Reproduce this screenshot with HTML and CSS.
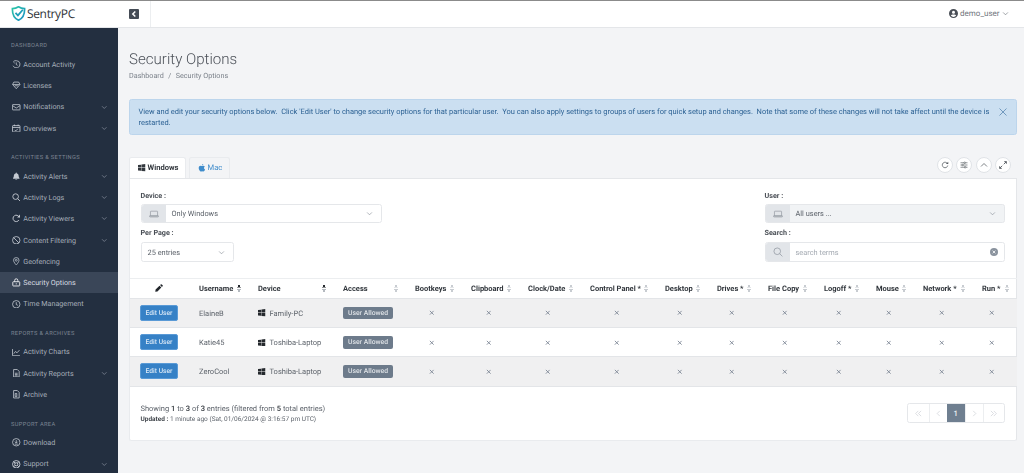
FILE: index.html
```html
<!DOCTYPE html>
<html lang="en">
<head>
<meta charset="utf-8">
<title>Security Options</title>
<link rel="stylesheet" href="styles.css">
</head>
<body>
<svg class="defs" width="0" height="0" aria-hidden="true">
  <symbol id="chev" viewBox="0 0 16 16"><path d="M2.500 5.500 8 11l5.500-5.500" fill="none" stroke="currentColor" stroke-width="1.500"/></symbol>
  <symbol id="win" viewBox="0 0 16 16"><path fill="currentColor" d="M0 2.300 6.500 1.400V7.500H0ZM7.300 1.300 16 0V7.500H7.300ZM0 8.300H6.500V14.500L0 13.600ZM7.300 8.300H16V16L7.300 14.700Z"/></symbol>
  <symbol id="laptop" viewBox="0 0 16 16"><path fill="none" stroke="currentColor" stroke-width="1.100" d="M3 3.500h10a.7.7 0 0 1 .7.7V11H2.300V4.200a.7.7 0 0 1 .7-.7ZM.8 11h14.400v.7a1 1 0 0 1-1 1H1.800a1 1 0 0 1-1-1Z"/></symbol>
  <symbol id="x" viewBox="0 0 16 16"><path d="M2.500 2.500l11 11M13.500 2.500l-11 11" fill="none" stroke="currentColor" stroke-width="2.600"/></symbol>
</svg>

<div class="app">
  <header class="topbar">
    <div class="brand">
      <svg class="shield" viewBox="0 0 16 16"><defs><linearGradient id="sg" x1="0" y1="0" x2="1" y2="1"><stop offset="0" stop-color="#2cc7a6"/><stop offset="1" stop-color="#1c8fc4"/></linearGradient></defs><path d="M8 .8c2 1.300 4 1.900 6.500 2 .2 5.500-1 9.800-6.500 12.400C2.500 12.600 1.300 8.300 1.500 2.800 4 2.700 6 2.100 8 .8Z" fill="none" stroke="url(#sg)" stroke-width="1.800"/><path d="M4.800 7.300 7.400 10l5.200-6" fill="none" stroke="#1f9fb8" stroke-width="1.900"/></svg>
      <span class="brand-name">SentryPC</span>
    </div>
    <div class="toggle-cell"><span class="toggle"><svg viewBox="0 0 10 10"><path d="M6.300 2.500 3.800 5l2.500 2.500" fill="none" stroke="#fff" stroke-width="1.500"/></svg></span></div>
    <div class="user">
      <svg class="user-ic" viewBox="0 0 16 16"><path fill="#4a4f57" d="M8 0a8 8 0 1 1 0 16A8 8 0 0 1 8 0Zm0 3.200a2.700 2.700 0 1 0 0 5.400 2.700 2.700 0 0 0 0-5.400ZM8 14a6 6 0 0 0 4.700-2.300C12 10.400 10.300 9.800 8 9.800s-4 .6-4.700 1.900A6 6 0 0 0 8 14Z"/></svg>
      <span>demo_user</span>
      <svg class="chev-sm"><use href="#chev"/></svg>
    </div>
  </header>

  <div class="body">
    <nav class="sidebar">
      <div class="nav-label">DASHBOARD</div>
      <a class="nav-item"><svg class="ni" viewBox="0 0 16 16"><path d="M2.500 3.500 5 5.800M3 2.500c1.500-1 3-1.500 5-1.200a6.800 6.800 0 1 1-6 9.500M8 4.500V8.500l2.500 1.500" fill="none" stroke="currentColor" stroke-width="1.500"/></svg><span>Account Activity</span></a>
      <a class="nav-item"><svg class="ni" viewBox="0 0 16 16"><path d="M8 14.500 1 6.500 3.500 2h9L15 6.500ZM1.500 6.500h13M5 9h6" fill="none" stroke="currentColor" stroke-width="1.500"/></svg><span>Licenses</span></a>
      <a class="nav-item"><svg class="ni" viewBox="0 0 16 16"><path d="M1.800 3h12.400a1 1 0 0 1 1 1v8a1 1 0 0 1-1 1H1.800a1 1 0 0 1-1-1V4a1 1 0 0 1 1-1ZM1 5l7 4.500L15 5" fill="none" stroke="currentColor" stroke-width="1.500"/></svg><span>Notifications</span><svg class="chev"><use href="#chev"/></svg></a>
      <a class="nav-item"><svg class="ni" viewBox="0 0 16 16"><path d="M2 3h12a1 1 0 0 1 1 1v10a1 1 0 0 1-1 1H2a1 1 0 0 1-1-1V4a1 1 0 0 1 1-1ZM4.500 1v3M11.500 1v3M1 6.500h14M5 11l2 2 4-4" fill="none" stroke="currentColor" stroke-width="1.600"/></svg><span>Overviews</span><svg class="chev"><use href="#chev"/></svg></a>

      <div class="nav-label gap">ACTIVITIES &amp; SETTINGS</div>
      <a class="nav-item"><svg class="ni" viewBox="0 0 16 16"><path d="M8 1a1 1 0 0 1 1 1v.6c2.300.5 3.500 2.300 3.500 4.600 0 2 .5 3.300 1.500 4.300v1H2v-1c1-1 1.500-2.300 1.500-4.300C3.500 4.900 4.700 3.100 7 2.600V2a1 1 0 0 1 1-1ZM6.200 14.200h3.600a1.800 1.800 0 0 1-3.600 0Z" fill="currentColor"/></svg><span>Activity Alerts</span><svg class="chev"><use href="#chev"/></svg></a>
      <a class="nav-item"><svg class="ni" viewBox="0 0 16 16"><path d="M6.800 1.500a5.300 5.300 0 1 1 0 10.600 5.300 5.300 0 0 1 0-10.600ZM10.600 10.600l4.400 4.400" fill="none" stroke="currentColor" stroke-width="1.700"/></svg><span>Activity Logs</span><svg class="chev"><use href="#chev"/></svg></a>
      <a class="nav-item"><svg class="ni" viewBox="0 0 16 16"><path d="M13.500 6A6 6 0 1 0 13 11.500" fill="none" stroke="currentColor" stroke-width="1.800"/><path d="M9.500 6.500h5.500V1Z" fill="currentColor"/></svg><span>Activity Viewers</span><svg class="chev"><use href="#chev"/></svg></a>
      <a class="nav-item"><svg class="ni" viewBox="0 0 16 16"><path d="M8 1a7 7 0 1 1 0 14A7 7 0 0 1 8 1ZM3 3l10 10" fill="none" stroke="currentColor" stroke-width="1.600"/></svg><span>Content Filtering</span><svg class="chev"><use href="#chev"/></svg></a>
      <a class="nav-item"><svg class="ni" viewBox="0 0 16 16"><path d="M8 1a5.200 5.200 0 0 1 5.200 5.200C13.200 9.500 8 15 8 15S2.800 9.500 2.800 6.200A5.200 5.200 0 0 1 8 1Zm0 3.400a1.800 1.800 0 1 0 0 3.600 1.800 1.800 0 0 0 0-3.600Z" fill="none" stroke="currentColor" stroke-width="1.400"/></svg><span>Geofencing</span></a>
      <a class="nav-item active"><svg class="ni" viewBox="0 0 16 16"><path d="M2.500 7h11a1 1 0 0 1 1 1v6a1 1 0 0 1-1 1h-11a1 1 0 0 1-1-1V8a1 1 0 0 1 1-1ZM5 7V4.500a3 3 0 0 1 6 0V7M8 10v2" fill="none" stroke="currentColor" stroke-width="1.700"/></svg><span>Security Options</span></a>
      <a class="nav-item"><svg class="ni" viewBox="0 0 16 16"><path d="M8 1a7 7 0 1 1 0 14A7 7 0 0 1 8 1ZM8 4v4.500l3 1.500" fill="none" stroke="currentColor" stroke-width="1.500"/></svg><span>Time Management</span></a>

      <div class="nav-label gap">REPORTS &amp; ARCHIVES</div>
      <a class="nav-item"><svg class="ni" viewBox="0 0 16 16"><path d="M1 2v12.500h14M3.500 10.500l3-4 3 2.500 4.500-5" fill="none" stroke="currentColor" stroke-width="1.500"/></svg><span>Activity Charts</span></a>
      <a class="nav-item"><svg class="ni" viewBox="0 0 16 16"><path d="M3 1h7l3.500 3.500V15H3ZM5.500 8h5M5.500 10.500h5M5.500 13h5" fill="none" stroke="currentColor" stroke-width="1.500"/></svg><span>Activity Reports</span><svg class="chev"><use href="#chev"/></svg></a>
      <a class="nav-item"><svg class="ni" viewBox="0 0 16 16"><path d="M3 1h7l3.500 3.500V15H3ZM6 6.500h3v6H6Z" fill="none" stroke="currentColor" stroke-width="1.500"/></svg><span>Archive</span></a>

      <div class="nav-label gap">SUPPORT AREA</div>
      <a class="nav-item"><svg class="ni" viewBox="0 0 16 16"><path d="M8 1a7 7 0 1 1 0 14A7 7 0 0 1 8 1ZM8 4v5M5.500 7 8 9.500 10.500 7M5 11.500h6" fill="none" stroke="currentColor" stroke-width="1.500"/></svg><span>Download</span></a>
      <a class="nav-item"><svg class="ni" viewBox="0 0 16 16"><path d="M8 1a7 7 0 1 1 0 14A7 7 0 0 1 8 1Zm0 4a3 3 0 1 0 0 6 3 3 0 0 0 0-6ZM3 3l3 3M13 3l-3 3M3 13l3-3M13 13l-3-3" fill="none" stroke="currentColor" stroke-width="1.800"/></svg><span>Support</span><svg class="chev"><use href="#chev"/></svg></a>
    </nav>

    <main class="main">
      <h1 class="title">Security Options</h1>
      <div class="crumbs">Dashboard<span class="sep">/</span>Security Options</div>

      <div class="alert">
        <p>View and edit your security options below.&nbsp; Click 'Edit User' to change security options for that particular user.&nbsp; You can also apply settings to groups of users for quick setup and changes.&nbsp; Note that some of these changes will not take affect until the device is restarted.</p>
        <svg class="alert-x" viewBox="0 0 16 16"><path d="M1 1l14 14M15 1 1 15" fill="none" stroke="currentColor" stroke-width="1.400"/></svg>
      </div>

      <div class="tabbar">
        <div class="tab current"><svg class="tab-ic"><use href="#win"/></svg>Windows</div>
        <div class="tab other"><svg class="tab-ic" viewBox="0 0 16 16"><path fill="currentColor" d="M11.200 0c.1 1.500-1.300 3.300-3 3.200C8 1.700 9.500.1 11.200 0ZM8.300 4.300c.8 0 1.800-.8 3.200-.8 1 0 2.300.5 3.100 1.700-2.700 1.600-2.200 5.300.6 6.400-.7 1.800-2.200 4.400-3.700 4.400-1 0-1.400-.7-2.700-.7s-1.800.7-2.700.7C4.200 16 1.500 12 1.500 8.500c0-3.200 2-5 4-5 1.200 0 2.200.8 2.800.8Z"/></svg>Mac</div>
        <div class="tools">
          <span class="tool"><svg viewBox="0 0 16 16"><path d="M13 5.500A5.500 5.500 0 1 0 13.500 9" fill="none" stroke="currentColor" stroke-width="1.500"/><path d="M9.800 6h4.700V1.300Z" fill="currentColor"/></svg></span>
          <span class="tool"><svg viewBox="0 0 16 16"><path d="M1 3.500h14M1 8h14M1 12.500h14" stroke="currentColor" stroke-width="1.300"/><path d="M8 2h2.500v3H8ZM4 6.500h2.500v3H4ZM9 11h2.500v3H9Z" fill="#fff" stroke="currentColor"/></svg></span>
          <span class="tool"><svg viewBox="0 0 16 16"><path d="M2 11 8 5l6 6" fill="none" stroke="currentColor" stroke-width="1.500"/></svg></span>
          <span class="tool"><svg viewBox="0 0 16 16"><path d="M9.500 6.500 14.500 1.500M14.800 1.200v4.300M14.800 1.200h-4.300M6.500 9.500l-5 5M1.200 14.800v-4.300M1.200 14.800h4.300" fill="none" stroke="currentColor" stroke-width="1.800"/></svg></span>
        </div>
      </div>

      <section class="panel">
        <div class="filters">
          <div class="fcol">
            <label class="flabel">Device :</label>
            <div class="field device">
              <span class="addon"><svg><use href="#laptop"/></svg></span>
              <span class="value">Only Windows</span>
              <svg class="chev-f"><use href="#chev"/></svg>
            </div>
            <label class="flabel second">Per Page :</label>
            <div class="field perpage">
              <span class="value plain">25 entries</span>
              <svg class="chev-f"><use href="#chev"/></svg>
            </div>
          </div>
          <div class="fcol right">
            <label class="flabel">User :</label>
            <div class="field device shaded">
              <span class="addon"><svg><use href="#laptop"/></svg></span>
              <span class="value">All users ...</span>
              <svg class="chev-f"><use href="#chev"/></svg>
            </div>
            <label class="flabel second">Search :</label>
            <div class="field perpage wide">
              <span class="addon"><svg viewBox="0 0 16 16"><path d="M6.800 1.500a5.300 5.300 0 1 1 0 10.600 5.300 5.300 0 0 1 0-10.600ZM10.600 10.600l4.400 4.400" fill="none" stroke="currentColor" stroke-width="1.200"/></svg></span>
              <span class="value placeholder">search terms</span>
              <svg class="clear" viewBox="0 0 16 16"><circle cx="8" cy="8" r="8" fill="#8a939e"/><path d="M5.300 5.300l5.400 5.400M10.700 5.300l-5.400 5.400" stroke="#fff" stroke-width="1.600"/></svg>
            </div>
          </div>
        </div>

        <table class="grid">
          <thead>
            <tr>
              <th class="c1"><svg class="pencil" viewBox="0 0 16 16"><path fill="#22262b" d="M11.500.8a1.500 1.500 0 0 1 2.100 0l1.600 1.600a1.500 1.500 0 0 1 0 2.100l-1.400 1.400-3.700-3.700ZM9 3.300l3.700 3.700-7.800 7.800L.5 15.500l.7-4.400Z"/></svg></th>
              <th class="c2"><div class="th"><span>Username</span><span class="sort up"></span></div></th>
              <th class="c3"><div class="th"><span>Device</span><span class="sort up"></span></div></th>
              <th class="c4"><div class="th"><span>Access</span><span class="sort"></span></div></th>
              <th class="c5"><div class="th"><span>Bootkeys</span><span class="sort"></span></div></th>
              <th class="c6"><div class="th"><span>Clipboard</span><span class="sort"></span></div></th>
              <th class="c7"><div class="th"><span>Clock/Date</span><span class="sort"></span></div></th>
              <th class="c8"><div class="th"><span>Control Panel *</span><span class="sort"></span></div></th>
              <th class="c9"><div class="th"><span>Desktop</span><span class="sort"></span></div></th>
              <th class="c10"><div class="th"><span>Drives *</span><span class="sort"></span></div></th>
              <th class="c11"><div class="th"><span>File Copy</span><span class="sort"></span></div></th>
              <th class="c12"><div class="th"><span>Logoff *</span><span class="sort"></span></div></th>
              <th class="c13"><div class="th"><span>Mouse</span><span class="sort"></span></div></th>
              <th class="c14"><div class="th"><span>Network *</span><span class="sort"></span></div></th>
              <th class="c15"><div class="th"><span>Run *</span><span class="sort"></span></div></th>
            </tr>
          </thead>
          <tbody>
            <tr class="odd">
              <td class="ctr"><span class="btn">Edit User</span></td><td>ElaineB</td>
              <td><span class="dev"><svg><use href="#win"/></svg>Family-PC</span></td>
              <td><span class="badge">User Allowed</span></td>
              <td class="no"><svg><use href="#x"/></svg></td><td class="no"><svg><use href="#x"/></svg></td><td class="no"><svg><use href="#x"/></svg></td><td class="no"><svg><use href="#x"/></svg></td><td class="no"><svg><use href="#x"/></svg></td><td class="no"><svg><use href="#x"/></svg></td><td class="no"><svg><use href="#x"/></svg></td><td class="no"><svg><use href="#x"/></svg></td><td class="no"><svg><use href="#x"/></svg></td><td class="no"><svg><use href="#x"/></svg></td><td class="no last"><svg><use href="#x"/></svg></td>
            </tr>
            <tr>
              <td class="ctr"><span class="btn">Edit User</span></td><td>Katie45</td>
              <td><span class="dev"><svg><use href="#win"/></svg>Toshiba-Laptop</span></td>
              <td><span class="badge">User Allowed</span></td>
              <td class="no"><svg><use href="#x"/></svg></td><td class="no"><svg><use href="#x"/></svg></td><td class="no"><svg><use href="#x"/></svg></td><td class="no"><svg><use href="#x"/></svg></td><td class="no"><svg><use href="#x"/></svg></td><td class="no"><svg><use href="#x"/></svg></td><td class="no"><svg><use href="#x"/></svg></td><td class="no"><svg><use href="#x"/></svg></td><td class="no"><svg><use href="#x"/></svg></td><td class="no"><svg><use href="#x"/></svg></td><td class="no last"><svg><use href="#x"/></svg></td>
            </tr>
            <tr class="odd">
              <td class="ctr"><span class="btn">Edit User</span></td><td>ZeroCool</td>
              <td><span class="dev"><svg><use href="#win"/></svg>Toshiba-Laptop</span></td>
              <td><span class="badge">User Allowed</span></td>
              <td class="no"><svg><use href="#x"/></svg></td><td class="no"><svg><use href="#x"/></svg></td><td class="no"><svg><use href="#x"/></svg></td><td class="no"><svg><use href="#x"/></svg></td><td class="no"><svg><use href="#x"/></svg></td><td class="no"><svg><use href="#x"/></svg></td><td class="no"><svg><use href="#x"/></svg></td><td class="no"><svg><use href="#x"/></svg></td><td class="no"><svg><use href="#x"/></svg></td><td class="no"><svg><use href="#x"/></svg></td><td class="no last"><svg><use href="#x"/></svg></td>
            </tr>
          </tbody>
        </table>

        <div class="foot">
          <div class="info">
            <div class="showing">Showing <b>1</b> to <b>3</b> of <b>3</b> entries (filtered from <b>5</b> total entries)</div>
            <div class="updated"><b>Updated :</b> 1 minute ago (Sat, 01/06/2024 @ 3:16:57 pm UTC)</div>
          </div>
          <div class="pager">
            <span class="pg w1"><svg viewBox="0 0 16 16"><path d="M7.500 2 1.500 8l6 6M14 2 8 8l6 6" fill="none" stroke="currentColor" stroke-width="1.300"/></svg></span>
            <span class="pg w2"><svg viewBox="0 0 16 16"><path d="M11 2 5 8l6 6" fill="none" stroke="currentColor" stroke-width="1.300"/></svg></span>
            <span class="pg cur">1</span>
            <span class="pg w2"><svg viewBox="0 0 16 16"><path d="M5 2l6 6-6 6" fill="none" stroke="currentColor" stroke-width="1.300"/></svg></span>
            <span class="pg w1"><svg viewBox="0 0 16 16"><path d="M2 2l6 6-6 6M8.500 2l6 6-6 6" fill="none" stroke="currentColor" stroke-width="1.300"/></svg></span>
          </div>
        </div>
      </section>
    </main>
  </div>
</div>
</body>
</html>
```

FILE: styles.css
```css
* { box-sizing: border-box; }
html, body { margin: 0; padding: 0; height: 473px; overflow: hidden; }
body { font-family: Roboto, "Liberation Sans", sans-serif; font-size: 7.400px; color: #5d636b; background: #f3f4f6; text-rendering: geometricPrecision; }
.defs { position: absolute; }
.app { width: 1024px; height: 473px; display: flex; flex-direction: column; border-top: 1px solid #8b8b8b; opacity: .999; }

.topbar { height: 26.500px; flex: none; display: flex; align-items: center; background: #fff; border-bottom: 1px solid #e4e6e9; }
.brand { width: 118px; height: 100%; display: flex; align-items: center; padding-left: 11px; gap: 1px; }
.shield { width: 15px; height: 15px; flex: none; }
.brand-name { font-family: "Open Sans", sans-serif; font-size: 12px; font-weight: 500; color: #2f3338; letter-spacing: -.35px; }
.toggle-cell { width: 33px; height: 100%; display: flex; align-items: center; padding-left: 11px; border-right: 1px solid #eceef0; }
.toggle { width: 10px; height: 9.500px; background: #444b55; border-radius: 1px; display: flex; }
.toggle svg { width: 10px; height: 10px; }
.user { margin-left: auto; margin-right: 15px; display: flex; align-items: center; color: #70757c; font-size: 8px; }
.user-ic { width: 9px; height: 9px; margin-right: 2px; flex: none; }
.chev-sm { width: 7px; height: 7px; margin-left: 2.500px; color: #70757c; }

.body { flex: 1; display: flex; min-height: 0; }
.sidebar { width: 118px; flex: none; background: #232f40; padding-top: 11.700px; color: #a3abb6; overflow: hidden; }
.nav-label { height: 14.300px; line-height: 15.300px; padding-left: 11px; font-size: 5.700px; letter-spacing: .35px; color: #7d8693; }
.nav-label.gap { margin-top: 12.300px; }
.nav-item { height: 21.330px; display: flex; align-items: center; padding-left: 12px; font-size: 7.200px; color: #a6aeb9; }
.nav-item .ni { width: 8.500px; height: 8.500px; margin-right: 2.800px; flex: none; color: #c4cad2; }
.nav-item .chev { width: 6.500px; height: 6.500px; margin-left: auto; margin-right: 11px; color: #99a2ae; }
.nav-item.active { background: #3a4658; color: #d8dce2; height: 20.500px; margin: .4px 0; }
.nav-item.active .ni { color: #eef0f3; }

.main { flex: 1; min-width: 0; padding: 0 7px 0 11px; }
.title { margin: 21.500px 0 0; font-size: 15.100px; font-weight: 300; line-height: 21px; color: #4b5058; }
.crumbs { margin-top: 0; font-size: 7.200px; line-height: 11px; color: #7b818a; }
.sep { margin: 0 4.500px; }
.alert { margin-top: 17.500px; height: 36.500px; padding: 6.500px 9px 0 8.500px; display: flex; background: #cbdff1; border: 1px solid #bcd5ec; border-radius: 2.500px; color: #2e6395; font-size: 7.470px; line-height: 11.300px; }
.alert p { margin: 0; width: 856px; }
.alert-x { width: 8px; height: 8px; margin: 1.500px 0 0 auto; flex: none; color: #4a7ba8; }

.tabbar { margin-top: 21.500px; height: 21.500px; display: flex; align-items: flex-start; }
.tab { height: 21.500px; display: flex; align-items: center; padding: 0 8px; font-size: 7.600px; border: 1px solid #e9ebee; border-bottom: none; border-radius: 2.500px 2.500px 0 0; }
.tab.current { width: 57px; background: #fff; color: #33383e; font-weight: 700; }
.tab.other { width: 41px; margin-left: 3px; color: #3f8ccb; background: #f3f4f6; font-weight: 400; }
.tab-ic { width: 7.500px; height: 7.500px; margin-right: 2px; flex: none; }
.tools { margin-left: auto; margin-right: 6px; display: flex; gap: 3.300px; }
.tool { width: 16px; height: 16px; border: 1px solid #dfe2e6; border-radius: 50%; background: #fff; display: flex; align-items: center; justify-content: center; color: #53595f; }
.tool svg { width: 8px; height: 8px; }

.panel { height: 263px; background: #fff; border: 1px solid #e9ebee; border-top-color: #e4e6e9; border-radius: 0 0 2.500px 2.500px; border-right-color: #e4e6e9; }
.filters { height: 98.500px; display: flex; justify-content: space-between; padding: 11px 11.500px 0 10.500px; }
.fcol { display: flex; flex-direction: column; align-items: flex-start; }
.flabel { height: 14px; line-height: 11px; font-size: 7.200px; font-weight: 700; color: #4a4f56; }
.flabel.second { margin-top: 4px; height: 15px; line-height: 12px; }
.field { display: flex; align-items: center; border: 1px solid #e5e7ea; border-radius: 2.500px; background: #fff; color: #5d636b; font-size: 7.400px; }
.device { width: 241px; height: 19px; }
.perpage { width: 93px; height: 20px; }
.wide { width: 240px; }
.right .device { width: 240px; }
.shaded { background: #f1f3f5; }
.addon { width: 24px; height: 100%; flex: none; background: #e2e5e9; display: flex; align-items: center; justify-content: center; border-radius: 2px 0 0 2px; color: #9198a1; }
.addon svg { width: 10px; height: 10px; }
.value { padding-left: 6px; }
.placeholder { color: #a5abb3; }
.chev-f { width: 7px; height: 7px; margin-left: auto; margin-right: 7.500px; color: #8a9099; }
.clear { width: 8px; height: 8px; margin-left: auto; margin-right: 5.500px; }

.grid { width: 887px; table-layout: fixed; border-collapse: collapse; }
.grid th { height: 20.500px; padding: 0 6px 0 11px; font-size: 7.500px; font-weight: 700; color: #32373d; text-align: left; border-top: 1px solid #eceef0; border-bottom: 1px solid #e3e5e8; }
.th { display: flex; align-items: center; justify-content: space-between; white-space: nowrap; }
.c1 { width: 58px; } .c2 { width: 59px; } .c3 { width: 85px; } .c4 { width: 72px; } .c5 { width: 56px; }
.c6 { width: 57px; } .c7 { width: 62px; } .c8 { width: 75px; } .c9 { width: 52px; } .c10 { width: 51px; }
.c11 { width: 56px; } .c12 { width: 52px; } .c13 { width: 47px; } .c14 { width: 59px; } .c15 { width: 46px; }
.grid th.c1 { padding: 0; text-align: center; }
.grid th.c15 { padding-right: 8.500px; }
.pencil { width: 8px; height: 8px; display: block; margin: 0 auto; }
.sort { width: 4px; height: 9px; flex: none; background:
  linear-gradient(to top left, #c8ccd1 50%, transparent 50%) 0 0/2px 3.500px no-repeat,
  linear-gradient(to top right, #c8ccd1 50%, transparent 50%) 2px 0/2px 3.500px no-repeat,
  linear-gradient(to bottom left, #c8ccd1 50%, transparent 50%) 0 100%/2px 3.500px no-repeat,
  linear-gradient(to bottom right, #c8ccd1 50%, transparent 50%) 2px 100%/2px 3.500px no-repeat; }
.sort.up { background:
  linear-gradient(to top left, #25292e 50%, transparent 50%) 0 0/2px 3.500px no-repeat,
  linear-gradient(to top right, #25292e 50%, transparent 50%) 2px 0/2px 3.500px no-repeat,
  linear-gradient(to bottom left, #b4b9bf 50%, transparent 50%) 0 100%/2px 3.500px no-repeat,
  linear-gradient(to bottom right, #b4b9bf 50%, transparent 50%) 2px 100%/2px 3.500px no-repeat; }
.grid td { height: 29.200px; padding: 0 0 0 11px; font-size: 7.500px; color: #5d636b; border-bottom: 1px solid #e3e5e8; white-space: nowrap; }
.grid tr.odd td { background: #f0f0f1; }
.grid td.ctr { padding: 0; text-align: center; }
.grid td.no { padding: 0; text-align: center; color: #7c8694; }
.grid td.no svg { width: 5.500px; height: 5.500px; display: block; margin: 0 auto; }
.grid td.last { padding-right: 4px; }
.btn { display: inline-block; width: 37.500px; height: 16px; line-height: 14.500px; text-align: center; background: #3681c6; border: 1px solid #5a9ad6; border-radius: 2px; color: #d9e8f6; font-size: 6.700px; font-weight: 500; }
.dev { display: flex; align-items: center; }
.dev svg { width: 7.500px; height: 7.500px; margin-right: 4px; flex: none; color: #24282d; }
.badge { display: inline-block; width: 50px; height: 12.500px; line-height: 12.500px; text-align: center; background: #6d7b8b; border-radius: 2px; color: #dfe3e7; font-size: 6.800px; font-weight: 500; }

.foot { display: flex; justify-content: space-between; padding: 16.500px 11.500px 0 10.500px; }
.info { padding-top: 0; }
.showing { font-size: 7.500px; line-height: 11px; color: #5d636b; }
.showing b { font-weight: 600; color: #3f444a; }
.updated { font-size: 6.500px; line-height: 11px; color: #5d636b; }
.updated b { font-weight: 700; color: #43484e; }
.pager { display: flex; height: 20px; border: 1px solid #e5e7ea; border-radius: 2.500px; }
.pg { height: 100%; display: flex; align-items: center; justify-content: center; border-left: 1px solid #eceef0; color: #c2c7cd; }
.pg:first-child { border-left: none; }
.pg svg { width: 7px; height: 7px; }
.w1 { width: 21px; }
.w2 { width: 17.500px; }
.cur { width: 18.500px; background: #6f7f90; color: #e9ecef; font-size: 7.600px; font-weight: 600; border-left: none; }
```
